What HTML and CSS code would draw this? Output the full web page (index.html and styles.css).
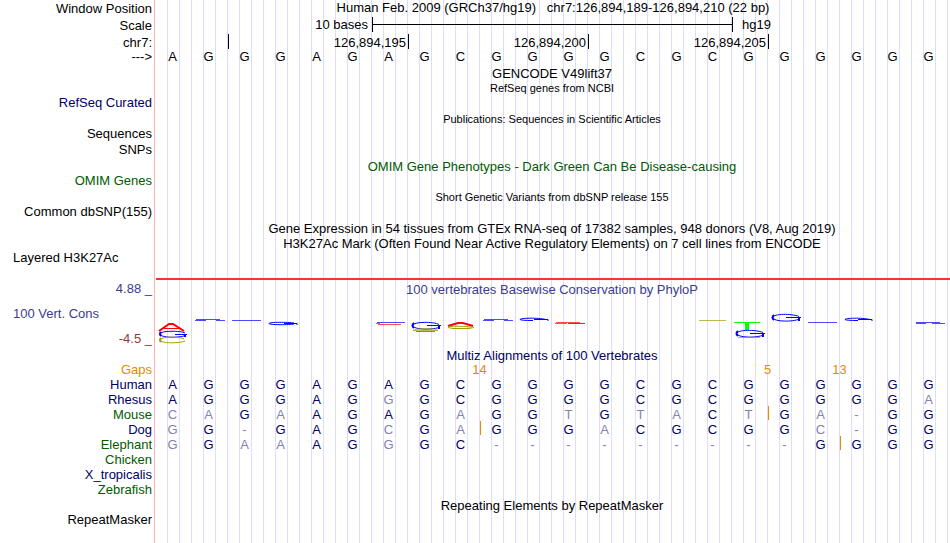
FILE: index.html
```
<!DOCTYPE html>
<html lang="en">
<head>
    <meta charset="UTF-8">
    <meta name="viewport" content="width=device-width, initial-scale=1.0">
    <title>Human chr7:126,894,189-126,894,210</title>
    <link rel="stylesheet" href="styles.css">
</head>
<body>
    <main class="tracks">

        <!-- Position and ruler -->
        <div class="row ruler">
            <div class="label">Window Position</div>
            <div class="plot center">Human Feb. 2009 (GRCh37/hg19) &nbsp; chr7:126,894,189-126,894,210 (22 bp)</div>
        </div>
        <div class="row ruler">
            <div class="label">Scale</div>
            <div class="plot bases">
                <span class="scale-text">10 bases</span>
                <span class="scale-bar"></span>
                <span class="scale-db">hg19</span>
            </div>
        </div>
        <div class="row ruler ruler-chrom">
            <div class="label">chr7:</div>
            <div class="plot bases">
                <span class="tick tick-first"></span>
                <span class="tick">126,894,195</span>
                <span class="tick">126,894,200</span>
                <span class="tick">126,894,205</span>
            </div>
        </div>
        <table class="sequence">
            <tbody id="reference"></tbody>
        </table>

        <!-- Gene and variant tracks -->
        <h2 class="title">GENCODE V49lift37</h2>
        <h2 class="title small tight">RefSeq genes from NCBI</h2>
        <div class="row"><div class="label navy">RefSeq Curated</div></div>
        <h2 class="title small">Publications: Sequences in Scientific Articles</h2>
        <div class="row spaced"><div class="label">Sequences</div></div>
        <div class="row"><div class="label">SNPs</div></div>
        <h2 class="title green">OMIM Gene Phenotypes - Dark Green Can Be Disease-causing</h2>
        <div class="row"><div class="label green">OMIM Genes</div></div>
        <h2 class="title small">Short Genetic Variants from dbSNP release 155</h2>
        <div class="row"><div class="label">Common dbSNP(155)</div></div>
        <h2 class="title">Gene Expression in 54 tissues from GTEx RNA-seq of 17382 samples, 948 donors (V8, Aug 2019)</h2>
        <h2 class="title tight">H3K27Ac Mark (Often Found Near Active Regulatory Elements) on 7 cell lines from ENCODE</h2>
        <div class="row h3k27ac">
            <div class="label left">Layered H3K27Ac</div>
            <div class="plot"></div>
        </div>

        <!-- Conservation -->
        <div class="row conservation">
            <div class="label cons-label">
                <span class="cons-max">4.88 _</span>
                <span class="left">100 Vert. Cons</span>
                <span class="cons-min">-4.5 _</span>
            </div>
            <div class="plot">
                <h2 class="cons-title">100 vertebrates Basewise Conservation by PhyloP</h2>
                <svg class="logo" width="792" height="49" viewBox="0 0 792 49" fill="none" role="img" aria-label="PhyloP scores per base">
                    <!-- base 1 -->
                    <path class="red" d="M3 34 L13 27 H17 L28 34"/>
                    <path class="red thin" d="M8 31.500 H24"/>
                    <path class="blue thin" d="M29 36 C25 33.500 4 33.500 4 37 C4 41 24 41 29 38.500 M19 37.500 H31"/>
                    <path class="blue" d="M5 35 Q3 37 5 39 M29 37 V40"/>
                    <path class="olive thin" d="M28 42 C24 39.500 4 39.500 4 43 C4 46.500 24 46.500 29 44"/>
                    <path class="olive" d="M5 41 Q3 43 5 45"/>
                    <!-- bases 2 to 4 -->
                    <path class="blue faint" d="M40 22.500 H64 M39 23.500 H50 M60 23.500 H69"/>
                    <path class="blue faint" d="M76 23.500 H105"/>
                    <path class="blue thin" d="M138 26 C132 25 113 25 113 26.500 C113 28 134 28 138 27 M128 26.500 H141 V28"/>
                    <!-- bases 7 to 12 -->
                    <path class="blue faint" d="M221 25.500 H249"/>
                    <path class="red faint" d="M220 26.500 H224 M222 27.500 H245"/>
                    <path class="blue thin" d="M283 27.500 C278 24.500 257 24.500 257 28.500 C257 33 278 33 284 30 M271 28.500 H285"/>
                    <path class="blue" d="M258 26 Q255 28.500 258 31 M283 28 V32"/>
                    <path class="olive faint" d="M257 33.500 C260 31 280 31 282 33.500 M257 33.500 H282"/>
                    <path class="red faint" d="M260 34.500 H279"/>
                    <path class="red" d="M292 29 L302 26 H307 L317 29"/>
                    <path class="olive thin" d="M316 30 C308 29 292 29 292 30 C292 32 312 32 318 30.500 M296 31.500 H314"/>
                    <path class="blue faint" d="M328 22.500 H352 M327 23.500 H338 M348 23.500 H357"/>
                    <path class="blue thin" d="M390 22.500 C382 20.500 364 21 364 22.500 Q365 23.500 377 23.500 M378 22.500 H392 V24"/>
                    <path class="red faint" d="M400 25.500 H424"/>
                    <path class="red faint" d="M399 26.500 H411"/>
                    <path class="blue faint" d="M412 26.500 H429"/>
                    <!-- bases 16 to 22 -->
                    <path class="olive faint" d="M543 23.500 H570"/>
                    <path class="lime" d="M578 25.500 H604"/>
                    <rect x="589" y="26" width="4" height="7" fill="#00ff00"/>
                    <path class="blue thin" d="M607 35.500 C600 32.500 581 32.500 581 36.500 C581 41 602 41 607 38 M594 36.500 H609"/>
                    <path class="blue" d="M582 34 Q579 36.500 582 39 M607 36 V40"/>
                    <path class="olive faint" d="M582 40.500 H604"/>
                    <path class="blue thin" d="M643 19.500 C636 16.500 617 16.500 617 20.500 C617 25 638 25 643 22 M630 20.500 H645"/>
                    <path class="blue" d="M618 18 Q615 20.500 618 23 M643 20 V24"/>
                    <path class="blue faint" d="M652 25.500 H681"/>
                    <path class="blue thin" d="M714 22.500 C706 20.500 689 21 689 22.500 Q690 23.500 702 23.500 M702 22.500 H716 V24"/>
                    <path class="blue faint" d="M760 25.500 H784 M760 26.500 H770 M776 26.500 H789"/>
                </svg>
            </div>
        </div>

        <!-- Multiz alignment -->
        <h2 class="title navy">Multiz Alignments of 100 Vertebrates</h2>
        <table class="sequence alignment">
            <tbody id="alignment">
                <tr class="gaps">
                    <th scope="row">Gaps</th>
                    <td colspan="8"></td>
                    <td colspan="2">14</td>
                    <td colspan="6"></td>
                    <td colspan="2">5</td>
                    <td colspan="2">13</td>
                    <td colspan="2"></td>
                </tr>
            </tbody>
        </table>

        <!-- Repeats -->
        <h2 class="title tight">Repeating Elements by RepeatMasker</h2>
        <div class="row"><div class="label">RepeatMasker</div></div>
    </main>

    <script>
        // Lower case = differs from human, "|" = insertion before the next base
        const reference = [
            { name: '--->', seq: 'AGGGAGAGCGGGGCGCGGGGGG', color: '' }
        ];

        const species = [
            { name: 'Human', seq: 'AGGGAGAGCGGGGCGCGGGGGG', color: 'navy' },
            { name: 'Rhesus', seq: 'AGGGAGgGCGGGGCGCGGGGGa', color: 'navy' },
            { name: 'Mouse', seq: 'caGaAGAGaGGtGtaCt|Ga-GG', color: 'green' },
            { name: 'Dog', seq: 'gG-GAGcGa|GGGaCGCGGc-GG', color: 'navy' },
            { name: 'Elephant', seq: 'gGaaAGgGC---------G|GGG', color: 'green' },
            { name: 'Chicken', seq: '', color: 'green' },
            { name: 'X_tropicalis', seq: '', color: 'navy' },
            { name: 'Zebrafish', seq: '', color: 'green' }
        ];

        function addRows(id, rows) {
            const body = document.getElementById(id);
            rows.forEach(function (row) {
                const tr = document.createElement('tr');
                const th = document.createElement('th');
                th.scope = 'row';
                th.className = row.color;
                th.textContent = row.name;
                tr.appendChild(th);

                let insert = false;
                for (const base of row.seq) {
                    if (base === '|') {
                        insert = true;
                        continue;
                    }
                    const td = document.createElement('td');
                    td.textContent = base.toUpperCase();
                    if (base === '-' || base !== base.toUpperCase()) td.classList.add('diff');
                    if (insert) td.classList.add('insert');
                    insert = false;
                    tr.appendChild(td);
                }
                body.appendChild(tr);
            });
        }

        addRows('reference', reference);
        addRows('alignment', species);
    </script>
</body>
</html>
```
FILE: styles.css
```
/* General Styles */
body {
    margin: 0;
    font-family: "Liberation Sans", Arial, sans-serif;
    font-size: 13px;
    line-height: 15px;
    color: #000;
    background-color: #fff;
}

/* Red divider and blue guide lines run behind every track */
.tracks {
    min-height: 100vh;
    background-image:
        linear-gradient(#ffb4b4, #ffb4b4),
        repeating-linear-gradient(to right, transparent 0, transparent 11px, #dcdcff 11px, #dcdcff 12px);
    background-position: 154px 0, 156px 0;
    background-size: 1px 100%, calc(100% - 156px) 100%;
    background-repeat: no-repeat;
}

.row {
    display: flex;
    height: 14px;
    line-height: 14px;
}

.row.spaced {
    height: 16px;
}

.label {
    flex: none;
    box-sizing: border-box;
    width: 156px;
    padding-right: 4px;
    text-align: right;
    white-space: nowrap;
}

.left {
    padding-left: 13px;
    text-align: left;
}

.plot {
    flex: 1;
    min-width: 0;
}

.center {
    text-align: center;
}

/* Track titles */
.title {
    margin: 0 2px 0 156px;
    padding-top: 2px;
    font-size: 13px;
    font-weight: normal;
    line-height: 15px;
    text-align: center;
    white-space: nowrap;
}

.title.small {
    font-size: 11px;
}

.title.tight {
    padding-top: 0;
}

.navy {
    color: #000064;
}

.green {
    color: #005a00;
}

/* Ruler */
.row.ruler {
    height: 17px;
    line-height: 17px;
}

.row.ruler-chrom {
    height: 16px;
}

.ruler .center {
    line-height: 15px;
}

.bases {
    display: grid;
    grid-template-columns: repeat(22, 36px);
}

.scale-text {
    grid-column: 1 / 7;
    padding-right: 4px;
    line-height: 15px;
    text-align: right;
}

.scale-bar {
    grid-column: 7 / 17;
    height: 15px;
    margin-right: -1px;
    border: solid #000;
    border-width: 0 1px;
    background: linear-gradient(#000, #000) 0 7px / 100% 1px no-repeat;
}

.scale-db {
    grid-column: 17 / 20;
    padding-left: 10px;
    line-height: 15px;
}

.tick {
    grid-column: span 5;
    height: 15px;
    margin-right: -1px;
    padding-right: 2px;
    border-right: 1px solid #000;
    text-align: right;
}

.tick-first {
    grid-column: span 2;
}

/* Base rows */
.sequence {
    width: 948px;
    border-collapse: collapse;
    table-layout: fixed;
    line-height: 14px;
}

.sequence th {
    box-sizing: border-box;
    width: 156px;
    padding: 0 4px 0 0;
    font-weight: normal;
    text-align: right;
}

.sequence td {
    position: relative;
    padding: 0 3px 0 0;
    text-align: center;
}

.alignment tr {
    height: 15px;
}

.alignment th,
.alignment td {
    vertical-align: top;
}

.alignment td {
    color: #000064;
}

.alignment td.diff {
    color: #8282b4;
}

.alignment .gaps th,
.alignment .gaps td {
    color: #e68a00;
}

.alignment .gaps td {
    padding-right: 1px;
}

.insert::before {
    content: "";
    position: absolute;
    top: -2px;
    left: 0;
    width: 1px;
    height: 14px;
    background-color: #e68a00;
}

/* Layered H3K27Ac */
.row.h3k27ac {
    height: 29px;
}

.h3k27ac .plot {
    border-bottom: 2px solid #ff3232;
}

.h3k27ac .label {
    padding-right: 0;
}

/* Conservation */
.row.conservation {
    height: 66px;
    line-height: 15px;
}

.cons-label {
    display: flex;
    flex-direction: column;
    justify-content: space-between;
    padding-top: 1px;
    color: #3c3c8c;
}

.cons-min {
    color: #8c3c3c;
}

.cons-title {
    margin: 0 2px 0 0;
    padding-top: 2px;
    font-size: 13px;
    font-weight: normal;
    color: #3c3c8c;
    text-align: center;
}

.logo {
    display: block;
}

.logo path {
    stroke-width: 2;
}

.logo .thin,
.logo .faint,
.logo .lime {
    stroke-width: 1;
}

.logo .faint {
    opacity: 0.7;
}

.logo .red {
    stroke: #ff0000;
}

.logo .blue {
    stroke: #0000ff;
}

.logo .olive {
    stroke: #a0a000;
}

.logo .lime {
    stroke: #00ff00;
}
```
